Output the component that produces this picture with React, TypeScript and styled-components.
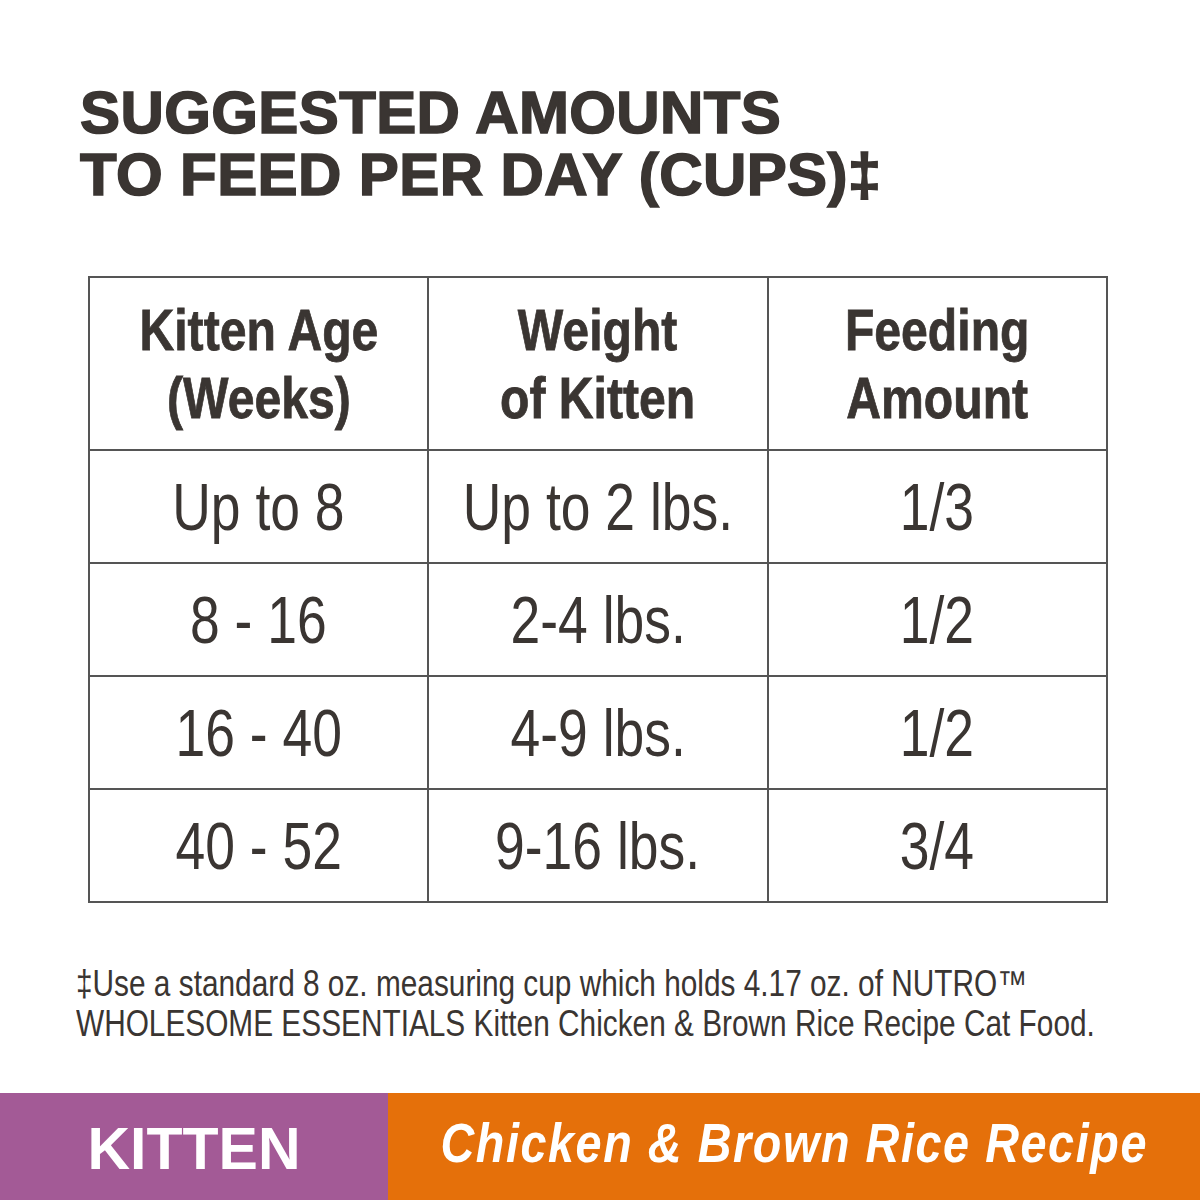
import styled, { createGlobalStyle } from 'styled-components';

const ink = '#3a3532';

const GlobalStyle = createGlobalStyle`
  html, body {
    margin: 0;
    padding: 0;
    background: #fff;
  }
  body {
    font-family: 'Liberation Sans', Arial, sans-serif;
    color: ${ink};
  }
`;

const rows = [
  { age: 'Up to 8', weight: 'Up to 2 lbs.', amount: '1/3' },
  { age: '8 - 16', weight: '2-4 lbs.', amount: '1/2' },
  { age: '16 - 40', weight: '4-9 lbs.', amount: '1/2' },
  { age: '40 - 52', weight: '9-16 lbs.', amount: '3/4' },
];

const App = () => {
  return (
    <Page>
      <GlobalStyle />
      <Content>
        <Title>
          SUGGESTED AMOUNTS
          <br />
          TO FEED PER DAY (CUPS)‡
        </Title>
        <Table>
          <thead>
            <tr>
              <HeadCell>
                <Narrow $scale={0.83}>
                  Kitten Age
                  <br />
                  (Weeks)
                </Narrow>
              </HeadCell>
              <HeadCell>
                <Narrow $scale={0.83}>
                  Weight
                  <br />
                  of Kitten
                </Narrow>
              </HeadCell>
              <HeadCell>
                <Narrow $scale={0.83}>
                  Feeding
                  <br />
                  Amount
                </Narrow>
              </HeadCell>
            </tr>
          </thead>
          <tbody>
            {rows.map((row) => (
              <tr key={row.age}>
                <Cell>
                  <Narrow $scale={0.81}>{row.age}</Narrow>
                </Cell>
                <Cell>
                  <Narrow $scale={0.81}>{row.weight}</Narrow>
                </Cell>
                <Cell>
                  <Narrow $scale={0.81}>{row.amount}</Narrow>
                </Cell>
              </tr>
            ))}
          </tbody>
        </Table>
        <Footnote>
          <Narrow $scale={0.828} $origin="left">
            ‡Use a standard 8 oz. measuring cup which holds 4.17 oz. of NUTRO™
            <br />
            WHOLESOME ESSENTIALS Kitten Chicken &amp; Brown Rice Recipe Cat Food.
          </Narrow>
        </Footnote>
      </Content>
      <Banner>
        <Stage>KITTEN</Stage>
        <Recipe>
          <Narrow $scale={0.85}>Chicken &amp; Brown Rice Recipe</Narrow>
        </Recipe>
      </Banner>
    </Page>
  );
};

export default App;

const Page = styled.div`
  width: 1200px;
  height: 1200px;
  display: flex;
  flex-direction: column;
  overflow: hidden;
`;

const Content = styled.div`
  flex: 1;
  min-height: 0;
  display: flex;
  flex-direction: column;
  padding: 82px 0 0 80px;
`;

/* condensed face stand-in: no narrow family is installed */
const Narrow = styled.span<{ $scale: number; $origin?: string }>`
  display: inline-block;
  white-space: nowrap;
  transform: scaleX(${(p) => p.$scale});
  transform-origin: ${(p) => p.$origin ?? 'center'};
`;

const Title = styled.h1`
  margin: 0 0 70px;
  font-family: 'Liberation Sans', Arial, sans-serif;
  font-weight: 700;
  font-size: 60px;
  line-height: 62px;
  letter-spacing: 0.4px;
  color: ${ink};
  -webkit-text-stroke: 1.6px ${ink};
`;

const Table = styled.table`
  margin-left: 8px;
  width: 1020px;
  border-collapse: collapse;
  table-layout: fixed;
  border: 2px solid #555;
`;

const HeadCell = styled.th`
  height: 171px;
  padding: 0;
  border: 2px solid #555;
  font-family: 'Liberation Sans', Arial, sans-serif;
  font-weight: 700;
  font-size: 58px;
  line-height: 68px;
  text-align: center;
  vertical-align: middle;
  color: ${ink};
  -webkit-text-stroke: 0.8px ${ink};
`;

const Cell = styled.td`
  height: 111px;
  padding: 0;
  border: 2px solid #555;
  font-family: 'Liberation Sans', Arial, sans-serif;
  font-weight: 400;
  font-size: 66px;
  text-align: center;
  vertical-align: middle;
  color: ${ink};
`;

const Footnote = styled.p`
  margin: 61px 0 0 -4px;
  font-family: 'Liberation Sans', Arial, sans-serif;
  font-size: 36px;
  line-height: 40px;
  color: ${ink};
`;

const Banner = styled.div`
  height: 107px;
  flex-shrink: 0;
  display: flex;
`;

const Stage = styled.div`
  width: 388px;
  flex-shrink: 0;
  background: #a35a96;
  display: flex;
  align-items: center;
  justify-content: center;
  color: #fff;
  font-family: 'Liberation Sans', Arial, sans-serif;
  font-weight: 700;
  font-size: 59px;
  padding-top: 4px;
`;

const Recipe = styled.div`
  flex: 1;
  min-width: 0;
  background: #e5700a;
  display: flex;
  align-items: center;
  justify-content: center;
  padding-bottom: 8px;
  color: #fff;
  font-family: 'Liberation Sans', Arial, sans-serif;
  font-weight: 700;
  font-style: italic;
  font-size: 55px;
  letter-spacing: 1.85px;
`;
